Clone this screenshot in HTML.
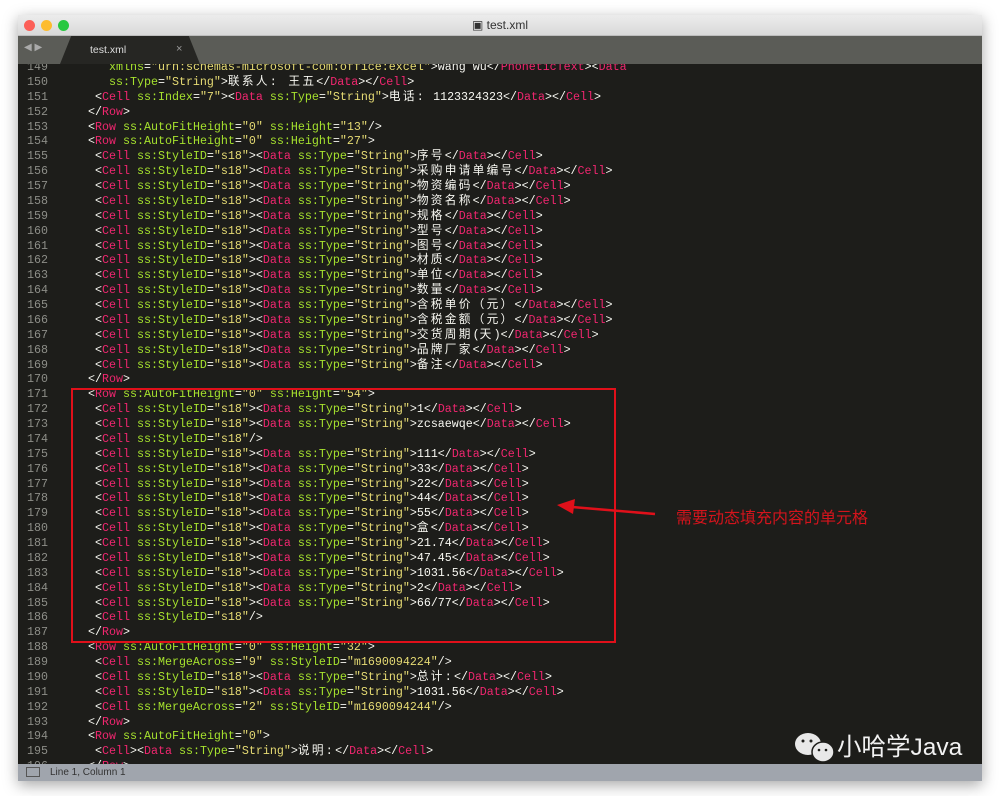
<!DOCTYPE html>
<html><head><meta charset="utf-8"><style>
*{margin:0;padding:0;box-sizing:border-box}
body{width:1000px;height:796px;background:#fff;position:relative;overflow:hidden;font-family:"Liberation Sans",sans-serif}
#win{position:absolute;left:18px;top:15px;width:964px;height:766px;background:#1d1d1a;box-shadow:0 4px 14px rgba(0,0,0,.35)}
#title{position:absolute;left:0;top:0;width:964px;height:21px;background:linear-gradient(#ececec,#d9d9d9);border-bottom:1px solid #bdbdbd}
.dot{position:absolute;top:5px;width:11px;height:11px;border-radius:50%}
#title .t{position:absolute;left:0;width:964px;text-align:center;top:3px;font-size:12px;color:#333}
#tabs{position:absolute;left:0;top:21px;width:964px;height:28px;background:#5b5c57}
#tab{position:absolute;left:42px;top:0;width:140px;height:28px;background:#262623;clip-path:polygon(8% 0,92% 0,100% 100%,0 100%)}
#code{position:absolute;left:0;top:49px;width:964px;height:700px;overflow:hidden}
pre{position:absolute;top:-4px;left:0;font-family:"Liberation Mono","Noto Sans CJK SC",monospace;font-size:11.67px;line-height:14.87px;color:#f8f8f2}
.n{display:inline-block;width:30px;text-align:right;color:#8d8e88;margin-right:26px}
.t{color:#f0266f}.a{color:#a6e22e}.s{color:#e6db74}
.c{letter-spacing:2.3px}
#status{position:absolute;left:0;top:749px;width:964px;height:17px;background:#a0a5ad;font-size:10px;color:#333}
</style></head><body>
<div id="win">
<div id="title">
<div class="dot" style="left:6px;background:#fc5f57"></div>
<div class="dot" style="left:23px;background:#fdbc2e"></div>
<div class="dot" style="left:40px;background:#28c840"></div>
<div class="t">▣ test.xml</div>
</div>
<div id="tabs">
<div style="position:absolute;left:6px;top:6px;color:#aaa;font-size:10px">◀ ▶</div>
<div id="tab"><span style="position:absolute;left:30px;top:8px;color:#ddd;font-size:10.5px">test.xml</span><span style="position:absolute;left:116px;top:7px;color:#999;font-size:11px">×</span></div>
</div>
<div id="code"><pre>
<span class="n">149</span>     <span class="a">xmlns</span>=<span class="s">"urn:schemas-microsoft-com:office:excel"</span>&gt;wang wu&lt;/<span class="t">PhoneticText</span>&gt;&lt;<span class="t">Data</span>
<span class="n">150</span>     <span class="a">ss:Type</span>=<span class="s">"String"</span>&gt;<span class="c">联系人: 王五</span>&lt;/<span class="t">Data</span>&gt;&lt;/<span class="t">Cell</span>&gt;
<span class="n">151</span>   &lt;<span class="t">Cell</span> <span class="a">ss:Index</span>=<span class="s">"7"</span>&gt;&lt;<span class="t">Data</span> <span class="a">ss:Type</span>=<span class="s">"String"</span>&gt;<span class="c">电话:</span> 1123324323&lt;/<span class="t">Data</span>&gt;&lt;/<span class="t">Cell</span>&gt;
<span class="n">152</span>  &lt;/<span class="t">Row</span>&gt;
<span class="n">153</span>  &lt;<span class="t">Row</span> <span class="a">ss:AutoFitHeight</span>=<span class="s">"0"</span> <span class="a">ss:Height</span>=<span class="s">"13"</span>/&gt;
<span class="n">154</span>  &lt;<span class="t">Row</span> <span class="a">ss:AutoFitHeight</span>=<span class="s">"0"</span> <span class="a">ss:Height</span>=<span class="s">"27"</span>&gt;
<span class="n">155</span>   &lt;<span class="t">Cell</span> <span class="a">ss:StyleID</span>=<span class="s">"s18"</span>&gt;&lt;<span class="t">Data</span> <span class="a">ss:Type</span>=<span class="s">"String"</span>&gt;<span class="c">序号</span>&lt;/<span class="t">Data</span>&gt;&lt;/<span class="t">Cell</span>&gt;
<span class="n">156</span>   &lt;<span class="t">Cell</span> <span class="a">ss:StyleID</span>=<span class="s">"s18"</span>&gt;&lt;<span class="t">Data</span> <span class="a">ss:Type</span>=<span class="s">"String"</span>&gt;<span class="c">采购申请单编号</span>&lt;/<span class="t">Data</span>&gt;&lt;/<span class="t">Cell</span>&gt;
<span class="n">157</span>   &lt;<span class="t">Cell</span> <span class="a">ss:StyleID</span>=<span class="s">"s18"</span>&gt;&lt;<span class="t">Data</span> <span class="a">ss:Type</span>=<span class="s">"String"</span>&gt;<span class="c">物资编码</span>&lt;/<span class="t">Data</span>&gt;&lt;/<span class="t">Cell</span>&gt;
<span class="n">158</span>   &lt;<span class="t">Cell</span> <span class="a">ss:StyleID</span>=<span class="s">"s18"</span>&gt;&lt;<span class="t">Data</span> <span class="a">ss:Type</span>=<span class="s">"String"</span>&gt;<span class="c">物资名称</span>&lt;/<span class="t">Data</span>&gt;&lt;/<span class="t">Cell</span>&gt;
<span class="n">159</span>   &lt;<span class="t">Cell</span> <span class="a">ss:StyleID</span>=<span class="s">"s18"</span>&gt;&lt;<span class="t">Data</span> <span class="a">ss:Type</span>=<span class="s">"String"</span>&gt;<span class="c">规格</span>&lt;/<span class="t">Data</span>&gt;&lt;/<span class="t">Cell</span>&gt;
<span class="n">160</span>   &lt;<span class="t">Cell</span> <span class="a">ss:StyleID</span>=<span class="s">"s18"</span>&gt;&lt;<span class="t">Data</span> <span class="a">ss:Type</span>=<span class="s">"String"</span>&gt;<span class="c">型号</span>&lt;/<span class="t">Data</span>&gt;&lt;/<span class="t">Cell</span>&gt;
<span class="n">161</span>   &lt;<span class="t">Cell</span> <span class="a">ss:StyleID</span>=<span class="s">"s18"</span>&gt;&lt;<span class="t">Data</span> <span class="a">ss:Type</span>=<span class="s">"String"</span>&gt;<span class="c">图号</span>&lt;/<span class="t">Data</span>&gt;&lt;/<span class="t">Cell</span>&gt;
<span class="n">162</span>   &lt;<span class="t">Cell</span> <span class="a">ss:StyleID</span>=<span class="s">"s18"</span>&gt;&lt;<span class="t">Data</span> <span class="a">ss:Type</span>=<span class="s">"String"</span>&gt;<span class="c">材质</span>&lt;/<span class="t">Data</span>&gt;&lt;/<span class="t">Cell</span>&gt;
<span class="n">163</span>   &lt;<span class="t">Cell</span> <span class="a">ss:StyleID</span>=<span class="s">"s18"</span>&gt;&lt;<span class="t">Data</span> <span class="a">ss:Type</span>=<span class="s">"String"</span>&gt;<span class="c">单位</span>&lt;/<span class="t">Data</span>&gt;&lt;/<span class="t">Cell</span>&gt;
<span class="n">164</span>   &lt;<span class="t">Cell</span> <span class="a">ss:StyleID</span>=<span class="s">"s18"</span>&gt;&lt;<span class="t">Data</span> <span class="a">ss:Type</span>=<span class="s">"String"</span>&gt;<span class="c">数量</span>&lt;/<span class="t">Data</span>&gt;&lt;/<span class="t">Cell</span>&gt;
<span class="n">165</span>   &lt;<span class="t">Cell</span> <span class="a">ss:StyleID</span>=<span class="s">"s18"</span>&gt;&lt;<span class="t">Data</span> <span class="a">ss:Type</span>=<span class="s">"String"</span>&gt;<span class="c">含税单价（元）</span>&lt;/<span class="t">Data</span>&gt;&lt;/<span class="t">Cell</span>&gt;
<span class="n">166</span>   &lt;<span class="t">Cell</span> <span class="a">ss:StyleID</span>=<span class="s">"s18"</span>&gt;&lt;<span class="t">Data</span> <span class="a">ss:Type</span>=<span class="s">"String"</span>&gt;<span class="c">含税金额（元）</span>&lt;/<span class="t">Data</span>&gt;&lt;/<span class="t">Cell</span>&gt;
<span class="n">167</span>   &lt;<span class="t">Cell</span> <span class="a">ss:StyleID</span>=<span class="s">"s18"</span>&gt;&lt;<span class="t">Data</span> <span class="a">ss:Type</span>=<span class="s">"String"</span>&gt;<span class="c">交货周期</span>(<span class="c">天</span>)&lt;/<span class="t">Data</span>&gt;&lt;/<span class="t">Cell</span>&gt;
<span class="n">168</span>   &lt;<span class="t">Cell</span> <span class="a">ss:StyleID</span>=<span class="s">"s18"</span>&gt;&lt;<span class="t">Data</span> <span class="a">ss:Type</span>=<span class="s">"String"</span>&gt;<span class="c">品牌厂家</span>&lt;/<span class="t">Data</span>&gt;&lt;/<span class="t">Cell</span>&gt;
<span class="n">169</span>   &lt;<span class="t">Cell</span> <span class="a">ss:StyleID</span>=<span class="s">"s18"</span>&gt;&lt;<span class="t">Data</span> <span class="a">ss:Type</span>=<span class="s">"String"</span>&gt;<span class="c">备注</span>&lt;/<span class="t">Data</span>&gt;&lt;/<span class="t">Cell</span>&gt;
<span class="n">170</span>  &lt;/<span class="t">Row</span>&gt;
<span class="n">171</span>  &lt;<span class="t">Row</span> <span class="a">ss:AutoFitHeight</span>=<span class="s">"0"</span> <span class="a">ss:Height</span>=<span class="s">"54"</span>&gt;
<span class="n">172</span>   &lt;<span class="t">Cell</span> <span class="a">ss:StyleID</span>=<span class="s">"s18"</span>&gt;&lt;<span class="t">Data</span> <span class="a">ss:Type</span>=<span class="s">"String"</span>&gt;1&lt;/<span class="t">Data</span>&gt;&lt;/<span class="t">Cell</span>&gt;
<span class="n">173</span>   &lt;<span class="t">Cell</span> <span class="a">ss:StyleID</span>=<span class="s">"s18"</span>&gt;&lt;<span class="t">Data</span> <span class="a">ss:Type</span>=<span class="s">"String"</span>&gt;zcsaewqe&lt;/<span class="t">Data</span>&gt;&lt;/<span class="t">Cell</span>&gt;
<span class="n">174</span>   &lt;<span class="t">Cell</span> <span class="a">ss:StyleID</span>=<span class="s">"s18"</span>/&gt;
<span class="n">175</span>   &lt;<span class="t">Cell</span> <span class="a">ss:StyleID</span>=<span class="s">"s18"</span>&gt;&lt;<span class="t">Data</span> <span class="a">ss:Type</span>=<span class="s">"String"</span>&gt;111&lt;/<span class="t">Data</span>&gt;&lt;/<span class="t">Cell</span>&gt;
<span class="n">176</span>   &lt;<span class="t">Cell</span> <span class="a">ss:StyleID</span>=<span class="s">"s18"</span>&gt;&lt;<span class="t">Data</span> <span class="a">ss:Type</span>=<span class="s">"String"</span>&gt;33&lt;/<span class="t">Data</span>&gt;&lt;/<span class="t">Cell</span>&gt;
<span class="n">177</span>   &lt;<span class="t">Cell</span> <span class="a">ss:StyleID</span>=<span class="s">"s18"</span>&gt;&lt;<span class="t">Data</span> <span class="a">ss:Type</span>=<span class="s">"String"</span>&gt;22&lt;/<span class="t">Data</span>&gt;&lt;/<span class="t">Cell</span>&gt;
<span class="n">178</span>   &lt;<span class="t">Cell</span> <span class="a">ss:StyleID</span>=<span class="s">"s18"</span>&gt;&lt;<span class="t">Data</span> <span class="a">ss:Type</span>=<span class="s">"String"</span>&gt;44&lt;/<span class="t">Data</span>&gt;&lt;/<span class="t">Cell</span>&gt;
<span class="n">179</span>   &lt;<span class="t">Cell</span> <span class="a">ss:StyleID</span>=<span class="s">"s18"</span>&gt;&lt;<span class="t">Data</span> <span class="a">ss:Type</span>=<span class="s">"String"</span>&gt;55&lt;/<span class="t">Data</span>&gt;&lt;/<span class="t">Cell</span>&gt;
<span class="n">180</span>   &lt;<span class="t">Cell</span> <span class="a">ss:StyleID</span>=<span class="s">"s18"</span>&gt;&lt;<span class="t">Data</span> <span class="a">ss:Type</span>=<span class="s">"String"</span>&gt;<span class="c">盒</span>&lt;/<span class="t">Data</span>&gt;&lt;/<span class="t">Cell</span>&gt;
<span class="n">181</span>   &lt;<span class="t">Cell</span> <span class="a">ss:StyleID</span>=<span class="s">"s18"</span>&gt;&lt;<span class="t">Data</span> <span class="a">ss:Type</span>=<span class="s">"String"</span>&gt;21.74&lt;/<span class="t">Data</span>&gt;&lt;/<span class="t">Cell</span>&gt;
<span class="n">182</span>   &lt;<span class="t">Cell</span> <span class="a">ss:StyleID</span>=<span class="s">"s18"</span>&gt;&lt;<span class="t">Data</span> <span class="a">ss:Type</span>=<span class="s">"String"</span>&gt;47.45&lt;/<span class="t">Data</span>&gt;&lt;/<span class="t">Cell</span>&gt;
<span class="n">183</span>   &lt;<span class="t">Cell</span> <span class="a">ss:StyleID</span>=<span class="s">"s18"</span>&gt;&lt;<span class="t">Data</span> <span class="a">ss:Type</span>=<span class="s">"String"</span>&gt;1031.56&lt;/<span class="t">Data</span>&gt;&lt;/<span class="t">Cell</span>&gt;
<span class="n">184</span>   &lt;<span class="t">Cell</span> <span class="a">ss:StyleID</span>=<span class="s">"s18"</span>&gt;&lt;<span class="t">Data</span> <span class="a">ss:Type</span>=<span class="s">"String"</span>&gt;2&lt;/<span class="t">Data</span>&gt;&lt;/<span class="t">Cell</span>&gt;
<span class="n">185</span>   &lt;<span class="t">Cell</span> <span class="a">ss:StyleID</span>=<span class="s">"s18"</span>&gt;&lt;<span class="t">Data</span> <span class="a">ss:Type</span>=<span class="s">"String"</span>&gt;66/77&lt;/<span class="t">Data</span>&gt;&lt;/<span class="t">Cell</span>&gt;
<span class="n">186</span>   &lt;<span class="t">Cell</span> <span class="a">ss:StyleID</span>=<span class="s">"s18"</span>/&gt;
<span class="n">187</span>  &lt;/<span class="t">Row</span>&gt;
<span class="n">188</span>  &lt;<span class="t">Row</span> <span class="a">ss:AutoFitHeight</span>=<span class="s">"0"</span> <span class="a">ss:Height</span>=<span class="s">"32"</span>&gt;
<span class="n">189</span>   &lt;<span class="t">Cell</span> <span class="a">ss:MergeAcross</span>=<span class="s">"9"</span> <span class="a">ss:StyleID</span>=<span class="s">"m1690094224"</span>/&gt;
<span class="n">190</span>   &lt;<span class="t">Cell</span> <span class="a">ss:StyleID</span>=<span class="s">"s18"</span>&gt;&lt;<span class="t">Data</span> <span class="a">ss:Type</span>=<span class="s">"String"</span>&gt;<span class="c">总计:</span>&lt;/<span class="t">Data</span>&gt;&lt;/<span class="t">Cell</span>&gt;
<span class="n">191</span>   &lt;<span class="t">Cell</span> <span class="a">ss:StyleID</span>=<span class="s">"s18"</span>&gt;&lt;<span class="t">Data</span> <span class="a">ss:Type</span>=<span class="s">"String"</span>&gt;1031.56&lt;/<span class="t">Data</span>&gt;&lt;/<span class="t">Cell</span>&gt;
<span class="n">192</span>   &lt;<span class="t">Cell</span> <span class="a">ss:MergeAcross</span>=<span class="s">"2"</span> <span class="a">ss:StyleID</span>=<span class="s">"m1690094244"</span>/&gt;
<span class="n">193</span>  &lt;/<span class="t">Row</span>&gt;
<span class="n">194</span>  &lt;<span class="t">Row</span> <span class="a">ss:AutoFitHeight</span>=<span class="s">"0"</span>&gt;
<span class="n">195</span>   &lt;<span class="t">Cell</span>&gt;&lt;<span class="t">Data</span> <span class="a">ss:Type</span>=<span class="s">"String"</span>&gt;<span class="c">说明:</span>&lt;/<span class="t">Data</span>&gt;&lt;/<span class="t">Cell</span>&gt;
<span class="n">196</span>  &lt;/<span class="t">Row</span>&gt;
</pre></div>
<div id="status"><span style="position:absolute;left:8px;top:3px;width:14px;height:10px;border:1px solid #555"></span><span style="position:absolute;left:32px;top:3px">Line 1, Column 1</span></div>
</div>
<div style="position:absolute;left:71px;top:388px;width:545px;height:255px;border:2px solid #e0101a"></div>
<svg style="position:absolute;left:0;top:0" width="1000" height="796">
<line x1="655" y1="514" x2="572" y2="507" stroke="#e0101a" stroke-width="2.5"/>
<polygon points="557,505 575,499 573,514" fill="#e0101a"/>
<g fill="#e8e8e8">
<ellipse cx="808" cy="744" rx="13" ry="11"/>
<ellipse cx="823" cy="752" rx="11" ry="10" stroke="#1d1d1a" stroke-width="1.5"/>
</g>
<g fill="#1d1d1a"><circle cx="803" cy="741" r="1.5"/><circle cx="811" cy="741" r="1.5"/><circle cx="819" cy="750" r="1.3"/><circle cx="826" cy="750" r="1.3"/></g>
</svg>
<div style="position:absolute;left:676px;top:505px;font-size:16px;color:#d4141c;font-family:'Noto Sans CJK SC',sans-serif;line-height:22px">需要动态填充内容的单元格</div>
<div style="position:absolute;left:837px;top:733px;font-size:24.5px;color:#f2f2f2;font-family:'Liberation Sans','Noto Sans CJK SC',sans-serif;line-height:30px">小哈学Java</div>
</body></html>
